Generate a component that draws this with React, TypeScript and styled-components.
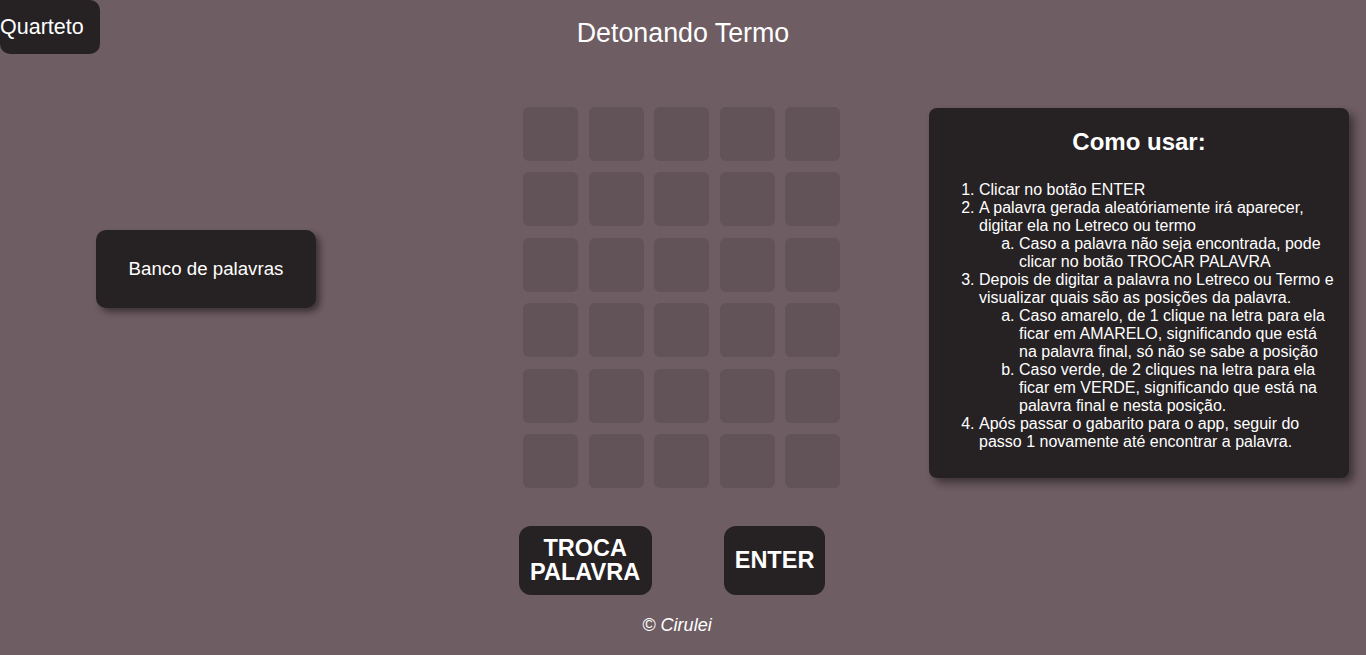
import React from "react";
import styled, { createGlobalStyle } from "styled-components";

const GlobalStyle = createGlobalStyle`
  html, body {
    margin: 0;
    padding: 0;
    background: #6e5d63;
    font-family: "Liberation Sans", Arial, sans-serif;
    color: #ffffff;
  }
  * { box-sizing: border-box; }
`;

const Page = styled.div`
  min-height: 655px;
  display: flex;
  flex-direction: column;
`;

const Header = styled.header`
  display: grid;
  grid-template-columns: 1fr auto 1fr;
  align-items: start;
`;

const DarkButton = styled.button`
  font-family: "Liberation Sans", Arial, sans-serif;
  background: #262123;
  color: #ffffff;
  border: none;
  cursor: pointer;
`;

const QuartetoButton = styled(DarkButton)`
  justify-self: start;
  width: 100px;
  height: 54px;
  padding: 0;
  border-radius: 0 10px 10px 10px;
  font-size: 21.5px;
  text-align: left;
`;

const Title = styled.h1`
  margin: 18px 0 0;
  font-size: 26.8px;
  font-weight: 400;
  line-height: 30px;
`;

const Main = styled.main`
  display: grid;
  grid-template-columns: 523px 317px 1fr;
  align-items: start;
  margin-top: 53px;
`;

const LeftColumn = styled.div`
  padding-left: 96px;
  padding-top: 123px;
`;

const BankButton = styled(DarkButton)`
  width: 220px;
  height: 78px;
  border-radius: 10px;
  font-size: 18.7px;
  box-shadow: 4px 4px 6px rgba(0, 0, 0, 0.45);
`;

const Board = styled.div`
  display: grid;
  grid-template-columns: repeat(5, 55px);
  grid-auto-rows: 54px;
  column-gap: 10.5px;
  row-gap: 11.4px;
`;

const Tile = styled.div`
  background: #615358;
  border-radius: 6px;
`;

const RightColumn = styled.div`
  padding-left: 89px;
  padding-top: 1px;
`;

const HelpPanel = styled.section`
  width: 420px;
  background: #262123;
  border-radius: 8px;
  padding: 10px;
  box-shadow: 5px 5px 8px rgba(0, 0, 0, 0.45);
  font-size: 16px;
  line-height: 18px;
`;

const HelpTitle = styled.h2`
  margin: 10px 0 25px;
  font-size: 24px;
  line-height: 28px;
  font-weight: 700;
  text-align: center;
`;

const Steps = styled.ol`
  margin: 0 0 17px;
  padding-left: 40px;
`;

const SubSteps = styled.ol`
  margin: 0;
  padding-left: 40px;
  list-style-type: lower-alpha;
`;

const Actions = styled.div`
  display: flex;
  justify-content: center;
  align-items: stretch;
  gap: 72px;
  padding-right: 22px;
  margin-top: 38px;
`;

const ActionButton = styled(DarkButton)<{ $padX: number }>`
  padding: 10px ${(p) => p.$padX}px;
  border-radius: 12px;
  font-size: 23.5px;
  font-weight: 700;
  line-height: 24.5px;
`;

const Footer = styled.footer`
  margin-top: 20px;
  text-align: center;
  padding-right: 12px;
  font-size: 18px;
  font-style: italic;
  line-height: 20px;
`;

const rows = 6;
const cols = 5;

export default function App() {
  return (
    <Page>
      <GlobalStyle />
      <Header>
        <QuartetoButton>Quarteto</QuartetoButton>
        <Title>Detonando Termo</Title>
        <div />
      </Header>
      <Main>
        <LeftColumn>
          <BankButton>Banco de palavras</BankButton>
        </LeftColumn>
        <Board>
          {Array.from({ length: rows * cols }).map((_, i) => (
            <Tile key={i} />
          ))}
        </Board>
        <RightColumn>
          <HelpPanel>
            <HelpTitle>Como usar:</HelpTitle>
            <Steps>
              <li>Clicar no botão ENTER</li>
              <li>
                A palavra gerada aleatóriamente irá aparecer, digitar ela no Letreco ou termo
                <SubSteps>
                  <li>Caso a palavra não seja encontrada, pode clicar no botão TROCAR PALAVRA</li>
                </SubSteps>
              </li>
              <li>
                Depois de digitar a palavra no Letreco ou Termo e visualizar quais são as posições da palavra.
                <SubSteps>
                  <li>
                    Caso amarelo, de 1 clique na letra para ela ficar em AMARELO, significando que está na palavra final, só não se sabe a posição
                  </li>
                  <li>
                    Caso verde, de 2 cliques na letra para ela ficar em VERDE, significando que está na palavra final e nesta posição.
                  </li>
                </SubSteps>
              </li>
              <li>Após passar o gabarito para o app, seguir do passo 1 novamente até encontrar a palavra.</li>
            </Steps>
          </HelpPanel>
        </RightColumn>
      </Main>
      <Actions>
        <ActionButton $padX={11.5}>
          TROCA
          <br />
          PALAVRA
        </ActionButton>
        <ActionButton $padX={11}>ENTER</ActionButton>
      </Actions>
      <Footer>© Cirulei</Footer>
    </Page>
  );
}
